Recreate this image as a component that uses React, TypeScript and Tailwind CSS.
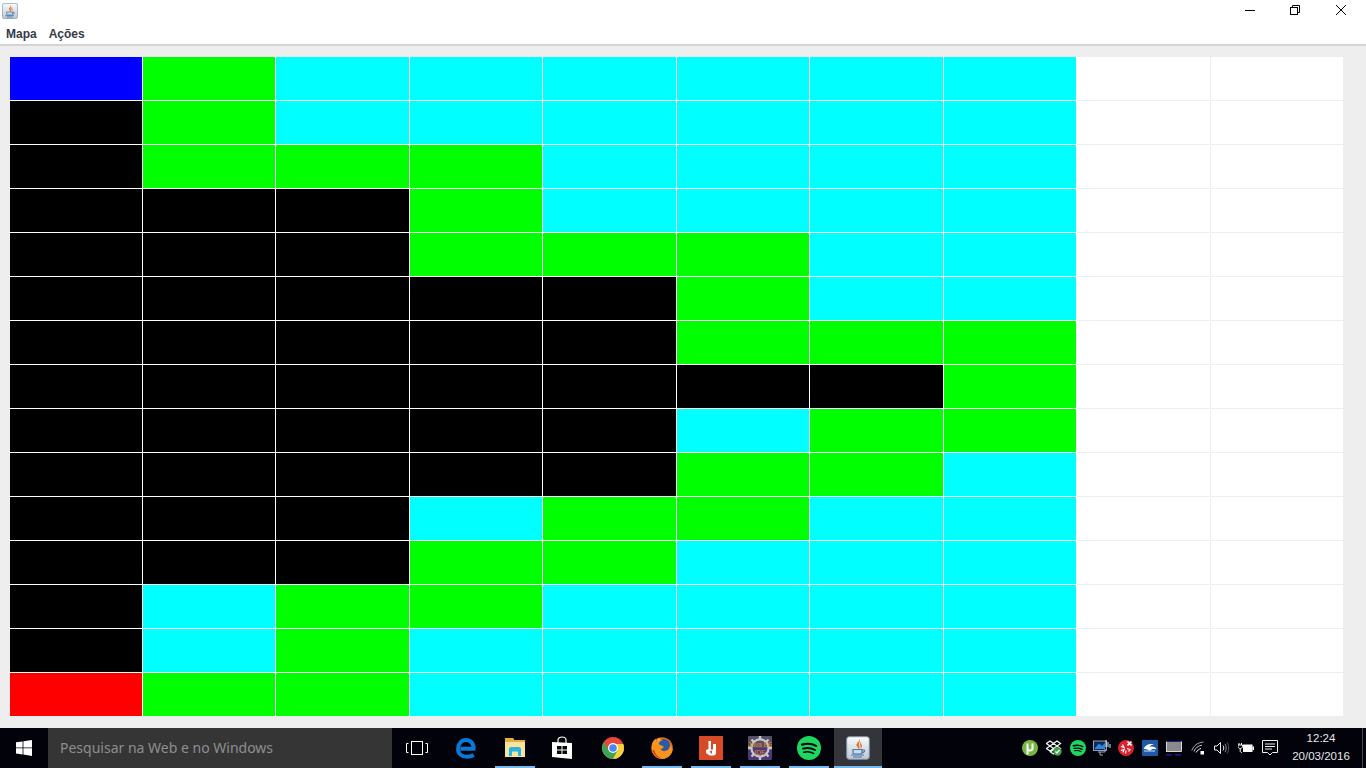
import { ReactNode } from "react";

type Cell = "B" | "G" | "C" | "K" | "R" | "W";

// one string per row of the map
const rows = [
  "BGCCCCCCWW",
  "KGCCCCCCWW",
  "KGGGCCCCWW",
  "KKKGCCCCWW",
  "KKKGGGCCWW",
  "KKKKKGCCWW",
  "KKKKKGGGWW",
  "KKKKKKKGWW",
  "KKKKKCGGWW",
  "KKKKKGGCWW",
  "KKKCGGCCWW",
  "KKKGGCCCWW",
  "KCGGCCCCWW",
  "KCGCCCCCWW",
  "RGGCCCCCWW",
];

const cellClass: Record<Cell, string> = {
  B: "bg-[#0000ff]",
  G: "bg-[#00ff00]",
  C: "bg-[#00ffff]",
  K: "bg-black",
  R: "bg-[#ff0000]",
  W: "bg-white shadow-[0_1px_0_#eeeeee,1px_0_0_#eeeeee]",
};

function JavaIcon({ size }: { size: number }) {
  return (
    <svg width={size} height={size} viewBox="0 0 24 24">
      <defs>
        <linearGradient id={`jv${size}`} x1="0" y1="0" x2="0" y2="1">
          <stop offset="0" stopColor="#fafbfc" />
          <stop offset="1" stopColor="#b9c6d6" />
        </linearGradient>
      </defs>
      <rect x="0.7" y="0.7" width="22.6" height="22.6" rx="2.5" fill={`url(#jv${size})`} stroke="#7f92a8" strokeWidth="1" />
      <path d="M12.5 2.5C14.8 5.5 9.5 7 10.6 9.8C11.2 11.2 13 11.6 12.5 13.4C15 11 12.6 9.8 12.8 8.2C13 6.6 15 5.4 12.5 2.5Z" fill="#e8711a" />
      <path d="M15.4 5.5C13.6 7.2 13.8 8.8 14.6 10C15.1 11 14.6 12 14 12.8C16.3 11.5 16.4 10 15.6 8.8C15 8 14.8 7 15.4 5.5Z" fill="#e8711a" />
      <path d="M7 13.5H16V16.5C16 17.5 15 18 14 18H9C8 18 7 17.5 7 16.5Z" fill="none" stroke="#4b77a8" strokeWidth="1.2" />
      <path d="M16 14H18C19 14 19 16.5 16 16.8M5 19H18M7 21H16" fill="none" stroke="#4b77a8" strokeWidth="1.2" />
    </svg>
  );
}

function Edge() {
  return (
    <svg width="22" height="22" viewBox="0 0 24 24">
      <path d="M6 12.8H20.2C20.6 7 16.8 3.2 12 3.2C7 3.2 3.4 7.5 3.4 13C3.4 18.5 7.5 21.5 13 21.5C16 21.5 18.4 20.8 20.4 19.6" fill="none" stroke="#0a78d7" strokeWidth="4.4" />
    </svg>
  );
}

function Explorer() {
  return (
    <svg width="22" height="22" viewBox="0 0 22 22">
      <path d="M1 1H9L10 3H21V20H1Z" fill="#f6d365" />
      <path d="M1 1H9L10 3H21V5H1Z" fill="#e0b040" />
      <path d="M1 5H21V20H1Z" fill="#fbe49a" />
      <path d="M5 19V12C5 11 6 10 7 10H15C16 10 17 11 17 12V19H14V14.5H8V19Z" fill="#27b4e8" />
    </svg>
  );
}

function Store() {
  return (
    <svg className="-ml-[3px]" width="22" height="24" viewBox="0 0 22 24">
      <path d="M7 7V4C7 2 9 1 11 1C13 1 15 2 15 4V7" fill="none" stroke="#fff" strokeWidth="1.2" />
      <path d="M1 6L21 7V23L1 21Z" fill="#fff" />
      <path d="M6 10H10.5V13.5H6ZM11.5 10H16V13.5H11.5ZM6 14.5H10.5V18H6ZM11.5 14.5H16V18H11.5Z" fill="#05060c" />
    </svg>
  );
}

function Chrome() {
  return (
    <svg width="22" height="22" viewBox="0 0 22 22">
      <circle cx="11" cy="11" r="11" fill="#e8453c" />
      <path d="M11 22C5 22 0 17 0 11C0 8.8 .7 6.8 1.8 5L6.5 13.5L11 22Z" fill="#3aa655" />
      <path d="M6.5 13.5L11 22C17 22 22 17 22 11C22 9.5 21.7 8.2 21.2 7H11Z" fill="#3aa655" />
      <path d="M21.2 7C22 9 22 11 22 11C22 17 17 22 11 22L15.5 13.5L11 7Z" fill="#f9cf3e" />
      <circle cx="11" cy="11" r="5" fill="#fff" />
      <circle cx="11" cy="11" r="3.8" fill="#4a8af0" />
    </svg>
  );
}

function Firefox() {
  return (
    <svg width="22" height="22" viewBox="0 0 22 22">
      <circle cx="11" cy="11" r="10.8" fill="#e66a1a" />
      <circle cx="13" cy="8" r="6" fill="#2c5aa6" />
      <path d="M1 9C1 5 3 3 5 1.5C4.6 3 5 4 6 4.8C7.5 3.5 10 3 11 3.5C9 4 7.5 5.5 8 7C8.5 8.5 11 8 12.5 9.5C13 11 11 12 9.5 12C11 15 15 15 17.5 12.5C19 11 19.5 9 19 7.5C21 10 22 12 21.5 13.5C20 19 15 22 11 22C5 22 .5 16 1 9Z" fill="#f7941d" />
      <path d="M1.2 13C3 18 7 21.6 11 21.6C7.5 20.5 4 17 3.5 13.5Z" fill="#d83a1a" />
      <path d="M8 1C6.5 2 6 3 6 4.8C7.5 3.5 9 3.4 11 3.5C10 2.8 9 2 8 1Z" fill="#fbb040" />
    </svg>
  );
}

function Adobe() {
  return (
    <svg width="24" height="24" viewBox="0 0 24 24">
      <rect width="24" height="24" fill="#d64a25" />
      <path d="M9.5 5H12V13.5H14V8H17V17C17 18.5 16 19.5 14.5 19.5H10.5L7 17V14L9.5 13Z" fill="#fff" />
      <path d="M10.5 15.5L13 14.5V18Z" fill="#d64a25" />
    </svg>
  );
}

function JavaEE() {
  return (
    <svg width="24" height="24" viewBox="0 0 24 24">
      <rect width="24" height="24" rx="1.5" fill="#4e3a78" />
      <path d="M0 0H24V12H0Z" fill="#5a5a5e" opacity="0.7" />
      <circle cx="12" cy="12" r="8.6" fill="none" stroke="#c9c9c9" strokeWidth="2.2" />
      <path d="M12 0V4M12 20V24M0 12H3M21 12H24M3.5 3.5L6 6M20.5 3.5L18 6M3.5 20.5L6 18M20.5 20.5L18 18" stroke="#c9c9c9" strokeWidth="2.4" />
      <text x="12" y="11" textAnchor="middle" fontSize="6.6" fill="#e8872a" fontFamily="Liberation Sans, sans-serif">Java EE</text>
      <text x="12" y="18.5" textAnchor="middle" fontSize="6.6" fill="#e8872a" fontFamily="Liberation Sans, sans-serif">IDE</text>
    </svg>
  );
}

function Spotify({ size }: { size: number }) {
  return (
    <svg width={size} height={size} viewBox="0 0 24 24">
      <circle cx="12" cy="12" r="12" fill="#1ed760" />
      <path d="M5 8.6C9.5 7.3 15 7.6 19.2 9.9" fill="none" stroke="#05060c" strokeWidth="2.2" strokeLinecap="round" />
      <path d="M6 12.6C10 11.6 14.5 12 18 14" fill="none" stroke="#05060c" strokeWidth="1.9" strokeLinecap="round" />
      <path d="M6.8 16.2C10 15.4 13.6 15.7 16.6 17.4" fill="none" stroke="#05060c" strokeWidth="1.6" strokeLinecap="round" />
    </svg>
  );
}

function TaskView() {
  return (
    <svg width="22" height="14" viewBox="0 0 22 14" fill="none" stroke="#fff" strokeWidth="1">
      <rect x="5.5" y="0.5" width="11" height="13" />
      <path d="M2.5 2.5H.5V11.5H2.5M19.5 2.5H21.5V11.5H19.5" />
    </svg>
  );
}

function UTorrent() {
  return (
    <svg width="16" height="16" viewBox="0 0 16 16">
      <circle cx="8" cy="8" r="8" fill="#76b83f" />
      <path d="M4.5 3.5V8.5C4.5 10.5 6 11.5 8 11.5C10 11.5 11.5 10.5 11.5 8.5V3.5H9.5V8.5C9.5 9.2 9 9.6 8 9.6C7 9.6 6.5 9.2 6.5 8.5V3.5Z" fill="#fff" />
      <path d="M6.5 11V14.5H4.5V9Z" fill="#fff" />
    </svg>
  );
}

function Dropbox() {
  return (
    <svg width="16" height="16" viewBox="0 0 16 16">
      <path d="M4 1L7.5 3.5L4 6L.5 3.5ZM11 1L14.5 3.5L11 6L7.5 3.5ZM4 6L7.5 8.5L4 11L.5 8.5ZM11 6L14.5 8.5L11 11L7.5 8.5ZM7.5 9.5L10.5 12L7.5 14L4.5 12Z" fill="none" stroke="#f4f4f4" strokeWidth="1.3" />
      <circle cx="11.5" cy="11.5" r="4.2" fill="#3fa34d" />
      <path d="M9.5 11.5L11 13L13.5 10" fill="none" stroke="#fff" strokeWidth="1.2" />
    </svg>
  );
}

function NetworkPc() {
  return (
    <svg width="18" height="16" viewBox="0 0 18 16">
      <rect x="0.5" y="1" width="13" height="9.5" fill="#0e2a5c" stroke="#b6c4d8" strokeWidth="0.8" />
      <path d="M2 8L6 3.5L9 6L12 3V9H2Z" fill="#2f86d8" />
      <path d="M13 0V7M15 2V7M17 4V8" stroke="#dfe7f2" strokeWidth="1" />
      <path d="M5 12H12M7 12V15H10M12 12V9" fill="none" stroke="#a8a8a8" strokeWidth="1" />
    </svg>
  );
}

function RedBall() {
  return (
    <svg width="16" height="16" viewBox="0 0 16 16">
      <circle cx="8" cy="8" r="8" fill="#d8232f" />
      <path d="M3 6.5L6 7.5L4.5 4.5M3 10.5L6 9.5L5 12.5M8 10.5L7.5 13.5M9 8.5L12 9.5L10.5 11.5" fill="none" stroke="#fff" strokeWidth="1.2" />
      <path d="M9.5 1.5L13.5 5.5M13.5 1.5L9.5 5.5" stroke="#fff" strokeWidth="1.6" />
    </svg>
  );
}

function BlueApp() {
  return (
    <svg width="16" height="16" viewBox="0 0 16 16">
      <rect width="16" height="16" rx="1" fill="#1f5aa8" />
      <path d="M1.5 9C3 5 8 3 12 4.5C9.5 4.5 8 5.5 7.5 7C10 6 13.5 6.5 14.5 9.5C12 8.5 9 9 8 11C6 9.5 4 9 1.5 9Z" fill="#fff" />
      <path d="M2 11H13" stroke="#cfe0f5" strokeWidth="1" />
    </svg>
  );
}

function MonitorTray() {
  return (
    <svg width="16" height="16" viewBox="0 0 16 16">
      <rect x="0.5" y="1.5" width="15" height="10" fill="#8a8a8a" />
      <path d="M.5 12V1.5M.5 11.5H15.5V1" fill="none" stroke="#d8d8d8" strokeWidth="1" />
      <path d="M.5 1.5H15.5" stroke="#1c1c8c" strokeWidth="1" />
      <path d="M0 14H6V15.5H0ZM9 14H15V15.5H9Z" fill="#1c1c8c" />
    </svg>
  );
}

function Wifi() {
  return (
    <svg width="14" height="14" viewBox="0 0 14 14" fill="none" stroke="#f2f2f2" strokeWidth="1">
      <path d="M.8 9.5C2.5 4.5 7 1.5 12.5 1" opacity="0.7" />
      <path d="M3 10.5C4 7 7.5 4.5 11 4.2" opacity="0.8" />
      <path d="M5.2 11.5C6 9.5 8 8 10 7.5" />
      <rect x="9.5" y="10" width="3.5" height="3.5" fill="#fff" stroke="none" />
    </svg>
  );
}

function Speaker() {
  return (
    <svg width="16" height="14" viewBox="0 0 16 14" fill="none" stroke="#f2f2f2" strokeWidth="1">
      <path d="M.5 5V9H3L6.5 12.5V1.5L3 5Z" />
      <path d="M9 4.5C10 6 10 8 9 9.5" />
      <path d="M11 2.8C12.6 5.2 12.6 8.8 11 11.2" opacity="0.6" />
      <path d="M13 1.2C15.2 4.5 15.2 9.5 13 12.8" opacity="0.35" />
    </svg>
  );
}

function Battery() {
  return (
    <svg width="16" height="12" viewBox="0 0 16 12">
      <path d="M1 1V3M3.5 1V3M0 3H4.5V4.5C4.5 6 3 6.5 2.2 6.5C1.5 6.5 0 6 0 4.5ZM2.2 6.5V9C2.2 10 3 10.5 4 10.5" fill="none" stroke="#fff" strokeWidth="1" />
      <rect x="5" y="2.5" width="9.5" height="7.5" fill="#fff" />
      <rect x="14.5" y="4.5" width="1.5" height="3.5" fill="#fff" />
    </svg>
  );
}

function Notification() {
  return (
    <svg width="16" height="16" viewBox="0 0 16 16" fill="none" stroke="#f2f2f2" strokeWidth="1">
      <path d="M.5 .5H15.5V12.5H10.5L8 15L5.5 12.5H.5Z" />
      <path d="M3 4H13M3 6.5H13M3 9H10" />
    </svg>
  );
}

function WinLogo() {
  return (
    <svg width="16" height="16" viewBox="0 0 16 16">
      <path d="M0 2.3L6.6 1.4V7.4H0ZM7.4 1.3L16 0V7.4H7.4ZM0 8.2H6.6V14.4L0 13.5ZM7.4 8.2H16V16L7.4 14.6Z" fill="#fff" />
    </svg>
  );
}

function TaskItem({ children, running, active }: { children: ReactNode; running?: boolean; active?: boolean }) {
  return (
    <div className={`relative flex h-full items-center justify-center ${active ? "ml-px w-12 bg-[#33353a]" : "w-[49px]"}`}>
      {children}
      {running && (
        <div className={`absolute bottom-0 h-0.5 bg-[#76b9ed] ${active ? "inset-x-0" : "left-[5px] w-10"}`} />
      )}
    </div>
  );
}

function TrayIcon({ children }: { children: ReactNode }) {
  return <div className="flex w-6 items-center justify-center">{children}</div>;
}

export default function App() {
  return (
    <div className="flex h-screen w-[1366px] flex-col overflow-hidden bg-white font-['Liberation_Sans',sans-serif]">
      {/* title bar */}
      <div className="flex h-[22px] items-start justify-between">
        <div className="pl-0.5 pt-[3px]">
          <JavaIcon size={16} />
        </div>
        <div className="flex pr-0.5">
          <div className="flex h-[21px] w-11 items-center justify-center">
            <div className="h-px w-2.5 bg-black" />
          </div>
          <div className="flex h-5 w-[46px] items-center justify-center">
            <svg width="10" height="10" viewBox="0 0 10 10" fill="none" stroke="#000" strokeWidth="1">
              <rect x="0.5" y="2.5" width="7" height="7" />
              <path d="M2.5 2.5V.5H9.5V7.5H7.5" />
            </svg>
          </div>
          <div className="flex h-5 w-[46px] items-center justify-center">
            <svg width="10" height="10" viewBox="0 0 10 10" fill="none" stroke="#000" strokeWidth="1">
              <path d="M0 0L10 10M10 0L0 10" />
            </svg>
          </div>
        </div>
      </div>

      {/* menu */}
      <div className="flex h-6 items-center gap-3 border-b-2 border-[#d4d4d4] pl-1.5 pt-0.5 text-xs font-bold text-[#333b47]">
        <span>Mapa</span>
        <span>Ações</span>
      </div>

      {/* map */}
      <div className="flex-1 bg-[#eeeeee] pl-2.5 pt-[11px]">
        <div className="grid w-[1333px] grid-cols-[132px_132px_133px_132px_133px_132px_133px_132px_133px_132px] grid-rows-[repeat(15,43px)] gap-px bg-white">
          {rows.flatMap((row, r) =>
            row.split("").map((c, i) => <div key={`${r}-${i}`} className={cellClass[c as Cell]} />)
          )}
        </div>
      </div>

      {/* taskbar */}
      <div className="flex h-10 items-center bg-[#01020a]">
        <div className="flex h-full w-12 items-center justify-center">
          <WinLogo />
        </div>
        <div className="flex h-full w-[344px] items-center bg-[#353535] pl-3 font-['Noto_Sans',sans-serif] text-sm text-[#8e8e8e]">
          Pesquisar na Web e no Windows
        </div>
        <TaskItem><TaskView /></TaskItem>
        <TaskItem><Edge /></TaskItem>
        <TaskItem running><Explorer /></TaskItem>
        <TaskItem><Store /></TaskItem>
        <TaskItem><Chrome /></TaskItem>
        <TaskItem running><Firefox /></TaskItem>
        <TaskItem running><Adobe /></TaskItem>
        <TaskItem running><JavaEE /></TaskItem>
        <TaskItem running><Spotify size={24} /></TaskItem>
        <TaskItem running active><JavaIcon size={24} /></TaskItem>

        <div className="ml-auto flex h-full items-center">
          <TrayIcon><UTorrent /></TrayIcon>
          <TrayIcon><Dropbox /></TrayIcon>
          <TrayIcon><Spotify size={16} /></TrayIcon>
          <TrayIcon><NetworkPc /></TrayIcon>
          <TrayIcon><RedBall /></TrayIcon>
          <TrayIcon><BlueApp /></TrayIcon>
          <TrayIcon><MonitorTray /></TrayIcon>
          <TrayIcon><Wifi /></TrayIcon>
          <TrayIcon><Speaker /></TrayIcon>
          <TrayIcon><Battery /></TrayIcon>
          <TrayIcon><Notification /></TrayIcon>
          <div className="flex w-20 flex-col items-center pb-0.5 pr-0.5 text-[11.5px] leading-[18px] text-[#e8e8e8]">
            <span>12:24</span>
            <span>20/03/2016</span>
          </div>
          <div className="h-full w-1 border-l border-[#4a4a4a]" />
        </div>
      </div>
    </div>
  );
}
